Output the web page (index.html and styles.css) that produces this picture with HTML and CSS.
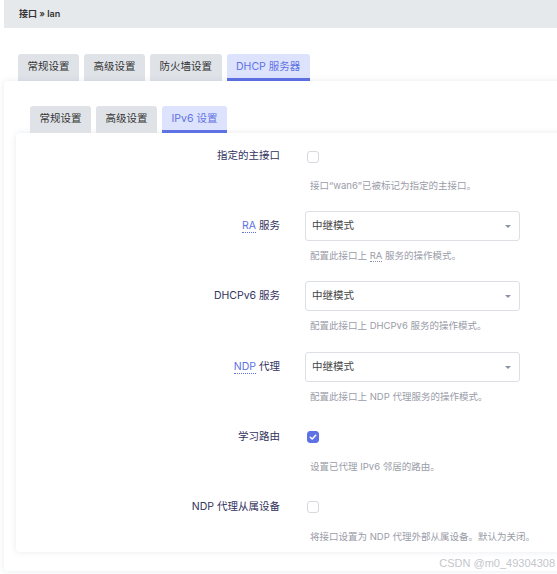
FILE: index.html
```html
<!DOCTYPE html>
<html lang="zh">
<head>
<meta charset="utf-8">
<link rel="stylesheet" href="styles.css">
</head>
<body>
<div class="crumb">接口 » lan</div>
<div class="tabs outer-tabs">
  <span class="tab">常规设置</span>
  <span class="tab">高级设置</span>
  <span class="tab">防火墙设置</span>
  <span class="tab active">DHCP 服务器</span>
</div>
<div class="card outer">
  <div class="tabs inner-tabs">
    <span class="tab">常规设置</span>
    <span class="tab">高级设置</span>
    <span class="tab active">IPv6 设置</span>
  </div>
  <div class="card inner">
    <div class="row">
      <div class="label">指定的主接口</div>
      <div class="field">
        <div class="ctl"><span class="cb"></span></div>
        <div class="desc">接口“wan6”已被标记为指定的主接口。</div>
      </div>
    </div>
    <div class="row">
      <div class="label"><abbr>RA</abbr> 服务</div>
      <div class="field">
        <div class="ctl"><div class="select">中继模式<span class="caret"></span></div></div>
        <div class="desc">配置此接口上 <abbr class="g">RA</abbr> 服务的操作模式。</div>
      </div>
    </div>
    <div class="row">
      <div class="label">DHCPv6 服务</div>
      <div class="field">
        <div class="ctl"><div class="select">中继模式<span class="caret"></span></div></div>
        <div class="desc">配置此接口上 DHCPv6 服务的操作模式。</div>
      </div>
    </div>
    <div class="row">
      <div class="label"><abbr>NDP</abbr> 代理</div>
      <div class="field">
        <div class="ctl"><div class="select">中继模式<span class="caret"></span></div></div>
        <div class="desc">配置此接口上 NDP 代理服务的操作模式。</div>
      </div>
    </div>
    <div class="row">
      <div class="label">学习路由</div>
      <div class="field">
        <div class="ctl"><span class="cb on"><svg viewBox="0 0 12 12" width="12" height="12"><path d="M3.3 6.2 L5.2 8 L8.7 4.3" fill="none" stroke="#fff" stroke-width="1.5" stroke-linecap="round" stroke-linejoin="round"/></svg></span></div>
        <div class="desc">设置已代理 IPv6 邻居的路由。</div>
      </div>
    </div>
    <div class="row">
      <div class="label">NDP 代理从属设备</div>
      <div class="field">
        <div class="ctl"><span class="cb"></span></div>
        <div class="desc">将接口设置为 NDP 代理外部从属设备。默认为关闭。</div>
      </div>
    </div>
  </div>
  <div class="watermark">CSDN @m0_49304308</div>
</div>
</body>
</html>
```
FILE: styles.css
```css
* { box-sizing: border-box; }
html, body { margin: 0; padding: 0; }
body {
  background: #fff;
  font-family: Inter, "Noto Sans CJK SC", sans-serif;
  color: #32325d;
  width: 557px;
  height: 574px;
  overflow: hidden;
}
.crumb {
  margin-left: 4px;
  height: 28px;
  background: #e6e9ec;
  padding-left: 15px;
  font-size: 9px;
  font-weight: 600;
  line-height: 28px;
  color: #333;
}
.tabs {
  display: flex;
  gap: 5px;
}
.outer-tabs {
  margin: 26px 0 0 18px;
}
.tab {
  display: block;
  height: 27px;
  padding: 0 9.5px;
  background: #dfe3e8;
  border-radius: 3px 3px 0 0;
  font-size: 10.5px;
  line-height: 26px;
  color: #333;
  white-space: nowrap;
}
.tab.active {
  background: #dde2fd;
  color: #5e72e4;
  border-bottom: 3px solid #5e72e4;
  line-height: 25px;
}
.card {
  background: #fff;
  border-radius: 4px;
  box-shadow: 0 0 6px rgba(40, 60, 90, 0.10);
}
.outer {
  position: relative;
  margin-left: 4px;
  width: 570px;
  height: 490px;
  padding: 25px 0 0 12px;
}
.inner-tabs {
  margin-left: 14px;
}
.inner {
  width: 560px;
  height: 419px;
  padding-top: 8px;
  border-radius: 4px 0 0 4px;
}
.row {
  display: flex;
  height: 70.2px;
}
.label {
  width: 264px;
  text-align: right;
  font-size: 10.5px;
  line-height: 29px;
  height: 30px;
  color: #32325d;
  white-space: nowrap;
}
abbr {
  text-decoration: none;
  color: #5e72e4;
  border-bottom: 1px dotted #5e72e4;
}
abbr.g {
  color: inherit;
  border-bottom: 1px dotted #8a8fa8;
}
.field {
  margin-left: 25px;
  display: flex;
  flex-direction: column;
}
.ctl {
  height: 30px;
  display: flex;
  align-items: center;
}
.cb {
  display: block;
  width: 12px;
  height: 12px;
  margin-left: 2px;
  margin-top: 1px;
  border: 1px solid #d6d9df;
  border-radius: 3px;
  background: #fff;
}
.cb.on {
  background: #5e72e4;
  border-color: #5e72e4;
  position: relative;
}
.cb.on svg {
  display: block;
  margin: -1px 0 0 -1px;
}
.select {
  position: relative;
  width: 215px;
  height: 30px;
  border: 1px solid #dcdfe4;
  border-radius: 3px;
  padding-left: 6px;
  font-size: 10.5px;
  line-height: 28px;
  color: #444;
}
.caret {
  position: absolute;
  right: 8px;
  top: 13px;
  width: 0;
  height: 0;
  border-left: 3px solid transparent;
  border-right: 3px solid transparent;
  border-top: 3px solid #8a93a3;
}
.desc {
  margin-top: 8px;
  padding-left: 5px;
  font-size: 9.5px;
  line-height: 14px;
  color: #9a9ca8;
  white-space: nowrap;
}
.watermark {
  position: absolute;
  right: 17px;
  bottom: 2px;
  font-family: "Liberation Sans", Arial, sans-serif;
  font-size: 11px;
  color: #c4c6cc;
  background: rgba(255,255,255,0.85);
  padding: 0 2px;
}
```
